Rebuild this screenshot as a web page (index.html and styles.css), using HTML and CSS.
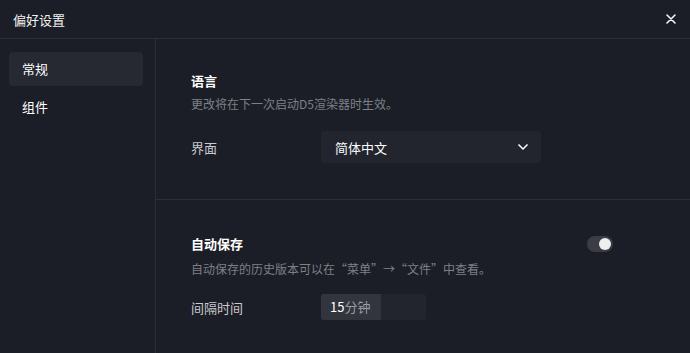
FILE: index.html
```html
<!DOCTYPE html>
<html lang="zh-CN">

<head>
    <meta charset="UTF-8">
    <meta name="viewport" content="width=device-width, initial-scale=1.0">
    <title>偏好设置</title>
    <link rel="stylesheet" href="styles.css">
</head>

<body>

    <!-- Header -->
    <header class="dialog-header">
        <span class="dialog-title">偏好设置</span>
        <button class="close-btn" aria-label="关闭">
            <svg width="10" height="10" viewBox="0 0 10 10">
                <path d="M1 1 L9 9 M9 1 L1 9" stroke="#fff" stroke-width="1.5" stroke-linecap="round" />
            </svg>
        </button>
    </header>

    <div class="dialog-body">
        <!-- Sidebar -->
        <aside class="sidebar">
            <a class="side-item active" href="#">常规</a>
            <a class="side-item" href="#">组件</a>
        </aside>

        <!-- Settings -->
        <main class="content">
            <section class="group">
                <h2>语言</h2>
                <p class="desc">更改将在下一次启动D5渲染器时生效。</p>
                <div class="row">
                    <span class="label">界面</span>
                    <div class="select">
                        <span>简体中文</span>
                        <svg width="12" height="8" viewBox="0 0 12 8">
                            <path d="M1.5 1.5 L6 6 L10.5 1.5" fill="none" stroke="#fff" stroke-width="1.5" />
                        </svg>
                    </div>
                </div>
            </section>

            <section class="group second">
                <div class="group-head">
                    <h2>自动保存</h2>
                    <span class="toggle"><span class="knob"></span></span>
                </div>
                <p class="desc">自动保存的历史版本可以在“菜单”→“文件”中查看。</p>
                <div class="row">
                    <span class="label">间隔时间</span>
                    <div class="interval">
                        <span class="interval-value"><b>15</b>分钟</span>
                    </div>
                </div>
            </section>
        </main>
    </div>

</body>

</html>
```

FILE: styles.css
```css
body {
    font-family: "Noto Sans CJK SC", "Noto Sans", sans-serif;
    margin: 0;
    padding: 0;
    background-color: #1b1e26;
    color: #fff;
    width: 690px;
    height: 353px;
    overflow: hidden;
}

.dialog-header {
    height: 38px;
    display: flex;
    align-items: center;
    justify-content: space-between;
    padding: 0 14px 0 13px;
    border-bottom: 1px solid #2b2e36;
}

.dialog-title {
    font-size: 13px;
    color: #f2f2f2;
}

.close-btn {
    background: none;
    border: none;
    padding: 0;
    display: flex;
    cursor: pointer;
}

.dialog-body {
    display: flex;
    height: 314px;
}

.sidebar {
    width: 156px;
    box-sizing: border-box;
    border-right: 1px solid #2b2e36;
    padding: 13px 12px 0 9px;
    display: flex;
    flex-direction: column;
    gap: 4px;
}

.side-item {
    display: block;
    height: 34px;
    line-height: 34px;
    padding-left: 13px;
    font-size: 13px;
    color: #fff;
    text-decoration: none;
    border-radius: 4px;
}

.side-item.active {
    background-color: #262932;
}

.content {
    flex: 1;
}

.group {
    padding: 30px 76px 0 35px;
    height: 161px;
    box-sizing: border-box;
    border-bottom: 1px solid #2b2e36;
}

.group.second {
    border-bottom: none;
    padding-top: 32px;
}

.group h2 {
    font-size: 13px;
    font-weight: bold;
    margin: 0;
    line-height: 24px;
}

.group-head {
    display: flex;
    align-items: center;
    justify-content: space-between;
}

.desc {
    font-size: 12px;
    color: #7d8088;
    margin: 2px 0 0;
    line-height: 18px;
}

.second .desc {
    margin-top: 4px;
}

.row {
    display: flex;
    align-items: center;
    margin-top: 18px;
}

.second .row {
    margin-top: 16px;
}

.label {
    width: 130px;
    font-size: 13px;
    color: #c9cbd0;
}

.select {
    width: 220px;
    height: 32px;
    box-sizing: border-box;
    background-color: #22252e;
    border-radius: 3px;
    display: flex;
    align-items: center;
    justify-content: space-between;
    padding: 0 12px 0 14px;
    font-size: 13px;
}

.toggle {
    width: 26px;
    height: 16px;
    border-radius: 8px;
    background-color: #3a3d45;
    display: flex;
    align-items: center;
    justify-content: flex-end;
    padding: 0 2px;
    box-sizing: border-box;
    margin-right: 1px;
}

.knob {
    width: 12px;
    height: 12px;
    border-radius: 50%;
    background-color: #eeeeee;
}

.interval {
    width: 105px;
    height: 26px;
    border-radius: 3px;
    background-color: #22252e;
    display: flex;
    overflow: hidden;
}

.interval-value {
    width: 60px;
    background-color: #32353d;
    font-size: 13px;
    line-height: 26px;
    padding-left: 9px;
    box-sizing: border-box;
    color: #9a9ca3;
}

.interval-value b {
    font-weight: normal;
    color: #fff;
}
```
